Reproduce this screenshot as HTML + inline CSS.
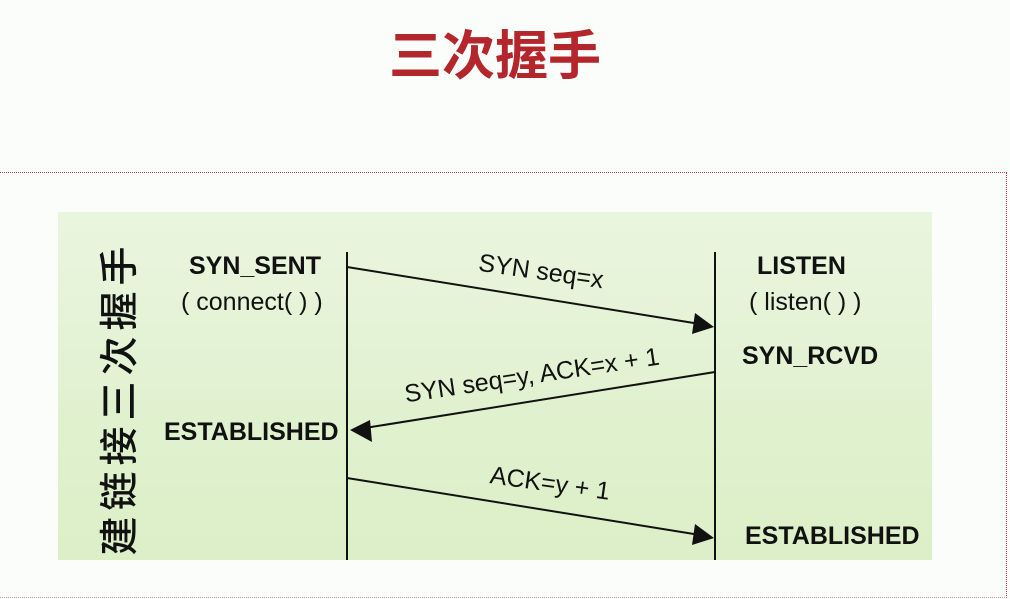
<!DOCTYPE html>
<html><head><meta charset="utf-8"><style>
body{margin:0;width:1010px;height:599px;background:#fbfdfb;position:relative;overflow:hidden;font-family:"Liberation Sans","Noto Sans CJK SC",sans-serif;}
.t{position:absolute;white-space:nowrap;color:#111;}
.b{font-weight:bold;font-size:25px;}
.n{font-size:25px;}
</style></head><body>
<div class="t" style="left:0;width:990px;top:14px;text-align:center;font-size:53px;font-weight:bold;color:#b3262c;font-family:'Noto Sans CJK SC',sans-serif;">三次握手</div>
<div style="position:absolute;left:0;top:172px;width:1006px;height:424px;border-top:1px dotted #b04050;border-right:1px dotted #b04050;border-bottom:1px dotted #d0a0a8;"></div>
<div style="position:absolute;left:58px;top:212px;width:874px;height:348px;background:linear-gradient(180deg,#eaf5df 0%,#e0f1cf 60%,#dcefc7 100%);"></div>
<div class="t" style="left:117px;top:398px;transform:translate(-50%,-50%) rotate(-90deg);font-size:39px;font-weight:500;letter-spacing:6px;font-family:'Noto Sans CJK SC',sans-serif;">建链接三次握手</div>
<svg style="position:absolute;left:0;top:0" width="1010" height="599">
<g stroke="#111" stroke-width="2" fill="none">
<line x1="347" y1="252" x2="347" y2="560"/>
<line x1="715" y1="252" x2="715" y2="560"/>
<line x1="347" y1="267" x2="700" y2="324"/>
<line x1="715" y1="372" x2="365" y2="428"/>
<line x1="347" y1="478" x2="700" y2="535"/>
</g>
<g fill="#111">
<polygon points="714,327 692,334 695,313"/>
<polygon points="350,430 370,420 372,442"/>
<polygon points="714,538 692,545 695,524"/>
</g>
</svg>
<div class="t b" style="left:189px;top:252px;">SYN_SENT</div>
<div class="t n" style="left:181px;top:288px;">( connect( ) )</div>
<div class="t b" style="left:164px;top:418px;">ESTABLISHED</div>
<div class="t b" style="left:757px;top:252px;">LISTEN</div>
<div class="t n" style="left:749px;top:288px;">( listen( ) )</div>
<div class="t b" style="left:742px;top:342px;">SYN_RCVD</div>
<div class="t b" style="left:745px;top:522px;">ESTABLISHED</div>
<div class="t n" style="left:541px;top:272px;transform:translate(-50%,-50%) rotate(8deg);">SYN seq=x</div>
<div class="t n" style="left:532px;top:376px;transform:translate(-50%,-50%) rotate(-8.5deg);">SYN seq=y, ACK=x + 1</div>
<div class="t n" style="left:550px;top:484px;transform:translate(-50%,-50%) rotate(8deg);">ACK=y + 1</div>
</body></html>
